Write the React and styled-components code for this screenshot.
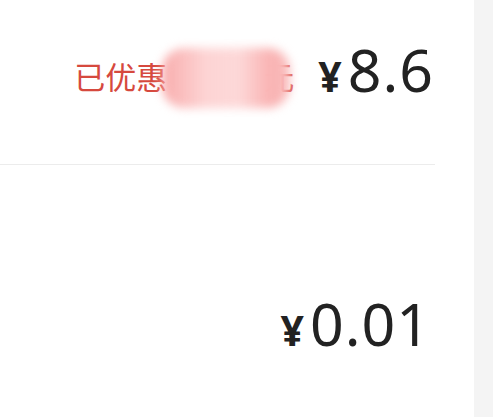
import React from "react";
import styled, { createGlobalStyle } from "styled-components";

const GlobalStyle = createGlobalStyle`
  html, body {
    margin: 0;
    padding: 0;
    background: #f4f4f4;
  }
`;

const StyledPage = styled.div`
  display: flex;
  height: 417px;
  font-family: "Noto Sans", "Noto Sans CJK SC", sans-serif;
`;

const StyledPanel = styled.div`
  width: 474px;
  background: #ffffff;
  display: flex;
  flex-direction: column;
`;

const StyledSide = styled.div`
  flex: 1;
  background: #f4f4f4;
`;

const StyledRow = styled.div`
  display: flex;
  justify-content: flex-end;
  align-items: baseline;
  padding: ${(p) => p.$top}px ${(p) => p.$right}px 0 0;
  height: ${(p) => p.$height}px;
  box-sizing: border-box;
`;

const StyledSaved = styled.span`
  position: relative;
  color: #d6493e;
  font-size: 31px;
  font-family: "Noto Sans CJK SC", sans-serif;
  line-height: 1;
  margin-right: 24px;
  top: -3px;
`;

const StyledHidden = styled.span`
  display: inline-block;
  width: 96px;
`;

const StyledBlur = styled.span`
  position: absolute;
  left: 88px;
  top: -12px;
  width: 128px;
  height: 60px;
  border-radius: 22px;
  background: linear-gradient(
    90deg,
    rgba(248, 168, 168, 0.95),
    rgba(253, 208, 208, 0.9) 35%,
    rgba(253, 214, 214, 0.95) 60%,
    rgb(249, 178, 178) 85%,
    rgb(250, 190, 190)
  );
  filter: blur(5px);
`;

const StyledYen = styled.span`
  color: #222222;
  font-size: 41px;
  font-weight: 700;
  margin-right: 6px;
  line-height: 1;
`;

const StyledAmount = styled.span`
  color: #222222;
  font-size: 59px;
  line-height: 1;
  letter-spacing: 1px;
`;

const StyledDivider = styled.div`
  height: 1px;
  background: #ececec;
  margin-right: 39px;
`;

export default function App() {
  return (
    <>
      <GlobalStyle />
      <StyledPage>
        <StyledPanel>
          <StyledRow $top={40} $right={40} $height={164}>
            <StyledSaved>
              已优惠
              <StyledHidden />
              元
              <StyledBlur />
            </StyledSaved>
            <StyledYen>¥</StyledYen>
            <StyledAmount>8.6</StyledAmount>
          </StyledRow>
          <StyledDivider />
          <StyledRow $top={129} $right={43} $height={252}>
            <StyledYen>¥</StyledYen>
            <StyledAmount>0.01</StyledAmount>
          </StyledRow>
        </StyledPanel>
        <StyledSide />
      </StyledPage>
    </>
  );
}
